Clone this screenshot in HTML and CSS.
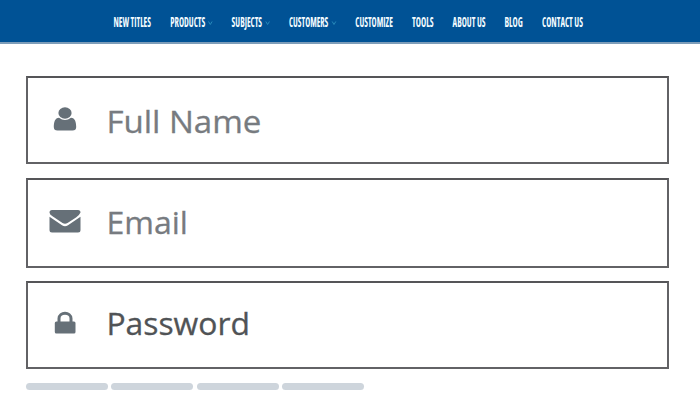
FILE: index.html
```html
<!DOCTYPE html>
<html lang="en">
<head>
<meta charset="utf-8">
<title>Sign up</title>
<link rel="stylesheet" href="styles.css">
</head>
<body>
<nav class="nav">
  <svg class="item" width="57" height="20"><text x="0.5" y="15.500" textLength="37.500" lengthAdjust="spacingAndGlyphs">NEW TITLES</text></svg>
  <svg class="item" width="61" height="20"><text x="0.3" y="15.500" textLength="35" lengthAdjust="spacingAndGlyphs">PRODUCTS</text><path d="M38.500 10.500l1.800 3 1.800-3"/></svg>
  <svg class="item" width="58" height="20"><text x="0.6" y="15.500" textLength="30.500" lengthAdjust="spacingAndGlyphs">SUBJECTS</text><path d="M34.800 10.500l1.800 3 1.800-3"/></svg>
  <svg class="item" width="66" height="20"><text x="0" y="15.500" textLength="39.300" lengthAdjust="spacingAndGlyphs">CUSTOMERS</text><path d="M43.200 10.500l1.800 3 1.800-3"/></svg>
  <svg class="item" width="57" height="20"><text x="0.3" y="15.500" textLength="37.500" lengthAdjust="spacingAndGlyphs">CUSTOMIZE</text></svg>
  <svg class="item" width="40" height="20"><text x="0" y="15.500" textLength="21.600" lengthAdjust="spacingAndGlyphs">TOOLS</text></svg>
  <svg class="item" width="52" height="20"><text x="0.6" y="15.500" textLength="33" lengthAdjust="spacingAndGlyphs">ABOUT US</text></svg>
  <svg class="item" width="38" height="20"><text x="0.4" y="15.500" textLength="18.400" lengthAdjust="spacingAndGlyphs">BLOG</text></svg>
  <svg class="item" width="44" height="20"><text x="0" y="15.500" textLength="41" lengthAdjust="spacingAndGlyphs">CONTACT US</text></svg>
</nav>
<main class="form">
  <div class="field">
    <svg class="icon" width="34" height="30" viewBox="0 0 34 30"><ellipse cx="17" cy="8" rx="6.600" ry="5.800"/><path d="M11 12.800Q17 17.400 23 12.800C27 13 28.200 17 28.200 22Q28.200 25.500 24.500 25.500H9.500Q5.800 25.500 5.800 22C5.800 17 7 13 11 12.800Z"/></svg>
    <svg class="label" width="200" height="44"><text x="0.4" y="33.500" textLength="155" lengthAdjust="spacingAndGlyphs">Full Name</text></svg>
  </div>
  <div class="field field-email">
    <svg class="icon" width="34" height="30" viewBox="0 0 34 30"><path d="M4 4H30Q32.500 4 32.500 6.500Q31.500 9 28 11.500L19.500 17Q17 18.400 14.500 17L4.500 10.300Q1.500 8.500 1.500 6.500Q1.500 4 4 4Z"/><path d="M1.500 10.800L14 19.300Q17 21 20 19.300L32.500 10.800V24Q32.500 26.500 30 26.500H4Q1.500 26.500 1.500 24Z"/></svg>
    <svg class="label" width="200" height="44"><text x="0.4" y="33" textLength="81.500" lengthAdjust="spacingAndGlyphs">Email</text></svg>
  </div>
  <div class="field field-password">
    <svg class="icon" width="34" height="30" viewBox="0 0 34 30"><rect x="6.800" y="13.500" width="20.700" height="12" rx="1.500"/><path class="shackle" d="M11 14V10.500C11 3.500 23 3.500 23 10.500V14"/></svg>
    <svg class="label dark" width="200" height="44"><text x="0.4" y="30.700" textLength="143.500" lengthAdjust="spacingAndGlyphs">Password</text></svg>
  </div>
  <div class="strength"><span></span><span></span><span></span><span></span></div>
</main>
</body>
</html>
```

FILE: styles.css
```css
* { box-sizing: border-box; }
body {
  margin: 0;
  height: 400px;
  overflow: hidden;
  background: #fff;
  font-family: "Open Sans", "Noto Sans", sans-serif;
}
.nav {
  display: flex;
  height: 44px;
  padding: 11px 0 0 113px;
  background: #005295;
  border-bottom: 2px solid #7d9db9;
}
.item {
  flex: none;
  display: block;
  overflow: visible;
  fill: #f2fbff;
  font-size: 13.5px;
  font-weight: 700;
  font-stretch: 75%;
}
.item path {
  fill: none;
  stroke: #2d8fbd;
  stroke-width: 0.9;
}
.form { padding: 32px 31px 0 26px; }
.field {
  display: flex;
  align-items: flex-start;
  height: 88px;
  margin-bottom: 14px;
  padding: 21px 0 0 20px;
  border: 2px solid #626265;
  border-top-color: #555558;
}
.field-email {
  height: 90px;
  margin-bottom: 13px;
}
.icon {
  flex: none;
  margin: 6px 25px 0 0;
  fill: #667078;
}
.field-email .icon { margin-top: 5px; }
.field-password .icon { margin-top: 4px; }
.shackle {
  fill: none;
  stroke: #667078;
  stroke-width: 3;
}
.label {
  margin-left: -1px;
  overflow: visible;
  fill: #777b80;
  stroke: #777b80;
  stroke-width: 0.3;
  font-size: 31px;
}
.dark {
  fill: #505356;
  stroke: #505356;
}
.strength { display: flex; gap: 3.8px; }
.strength span {
  width: 81.7px;
  height: 7px;
  border-radius: 3.5px;
  background: #ced5dc;
}
```
